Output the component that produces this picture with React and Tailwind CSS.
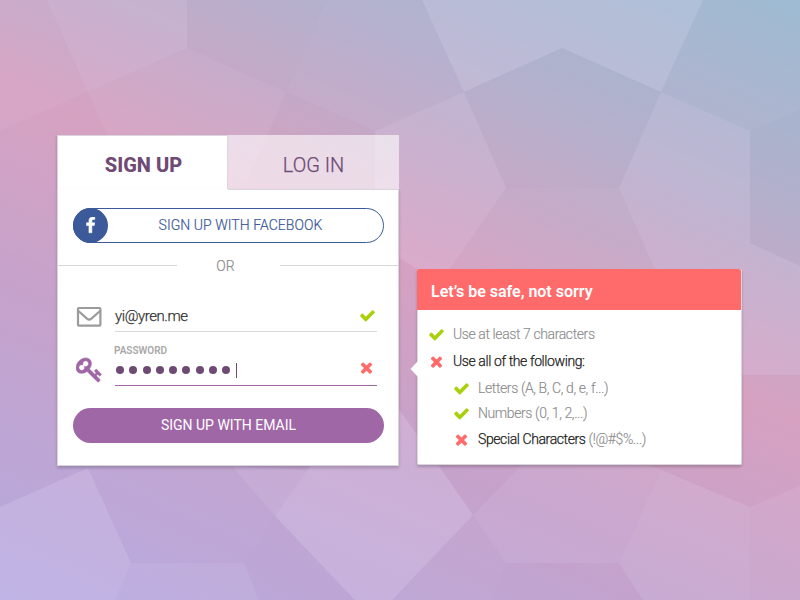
const FACETS = [
  ["0,0 47,0 88,92 0,131", 0.07],
  ["47,0 187,0 187,48 88,92", 0.14],
  ["187,48 286,92 244,188 131,188 88,92", 0.08],
  ["187,0 327,0 286,92 187,48", 0.03],
  ["327,0 422,0 464,92 375,131 286,92", 0.06],
  ["422,0 703,0 661,92 562,48 464,92", 0.2],
  ["703,0 800,0 800,110 750,131 661,92", 0.06],
  ["464,92 562,48 661,92 619,188 506,188", 0.03],
  ["375,131 464,92 506,188 440,283 375,243", 0.15],
  ["506,188 619,188 661,283 440,283", 0.05],
  ["661,92 750,131 750,243 661,283 619,188", 0.15],
  ["750,243 800,266 800,375 700,375 661,283", 0.15],
  ["661,470 750,507 750,600 643,600 619,563", 0.13],
  ["750,507 800,486 800,600 750,600", 0.09],
  ["521,466 562,425 661,470 619,563 506,563 473,515", 0.1],
  ["473,515 506,563 490,600 392,600", 0.04],
  ["375,375 473,515 392,600 355,600 275,516", 0.2],
  ["232,466 308,470 275,516", 0.12],
  ["88,468 232,466 275,516 244,563 131,563", 0.03],
  ["131,563 244,563 259,600 115,600", 0.11],
  ["0,507 88,468 131,563 115,600 0,600", 0.18],
  ["0,131 88,92 131,188 88,283 0,246", 0.03],
];

function Backdrop() {
  return (
    <svg className="absolute inset-0" width="800" height="600" viewBox="0 0 800 600" aria-hidden="true">
      <defs>
        <linearGradient id="sky" gradientUnits="userSpaceOnUse" x1="800" y1="0" x2="463" y2="796">
          <stop offset="0" stopColor="#99b9d0" />
          <stop offset="0.23" stopColor="#b4afcb" />
          <stop offset="0.45" stopColor="#d6a1c1" />
          <stop offset="0.67" stopColor="#c5a2cb" />
          <stop offset="1" stopColor="#b5aae0" />
        </linearGradient>
      </defs>
      <rect width="800" height="600" fill="url(#sky)" />
      {FACETS.map(([points, opacity]) => (
        <polygon key={points} points={points} fill="#efe4ff" fillOpacity={opacity} />
      ))}
    </svg>
  );
}

function Check() {
  return (
    <svg className="size-[17px] shrink-0 text-[#a9d00c]" viewBox="0 0 1792 1792" fill="currentColor">
      <path d="M1671 566q0 40-28 68l-724 724-136 136q-28 28-68 28t-68-28l-136-136-362-362q-28-28-28-68t28-68l136-136q28-28 68-28t68 28l294 295 656-657q28-28 68-28t68 28l136 136q28 28 28 68z" />
    </svg>
  );
}

function Cross() {
  return (
    <svg className="size-[17px] shrink-0 text-[#ff6b6b]" viewBox="0 0 1792 1792" fill="currentColor">
      <path d="M1490 1322q0 40-28 68l-136 136q-28 28-68 28t-68-28l-294-294-294 294q-28 28-68 28t-68-28l-136-136q-28-28-28-68t28-68l294-294-294-294q-28-28-28-68t28-68l136-136q28-28 68-28t68 28l294 294 294-294q28-28 68-28t68 28l136 136q28 28 28 68t-28 68l-294 294 294 294q28 28 28 68z" />
    </svg>
  );
}

function Envelope() {
  return (
    <svg width="27" height="22" viewBox="0 0 27 22" fill="none" stroke="#9b9b9b" strokeWidth="2.2" strokeLinejoin="round">
      <rect x="3" y="2" width="22.4" height="17.6" rx="0.8" />
      <path d="M3.4 5 L12 12.6 Q14.2 14.4 16.4 12.6 L25 5" />
    </svg>
  );
}

function Key() {
  return (
    <svg width="27" height="27" viewBox="0 0 1792 1792" fill="#a067a7" stroke="#a067a7" strokeWidth="40">
      <path d="M832 512q0-80-56-136t-136-56-136 56-56 136q0 42 19 83-41-19-83-19-80 0-136 56t-56 136 56 136 136 56 136-56 56-136q0-42-19-83 41 19 83 19 80 0 136-56t56-136zm851 704q0 17-49 66t-66 49q-9 0-28.5-16t-36.5-33-38.5-40-24.5-26l-96 96 220 220q28 28 28 68 0 42-39 81t-81 39q-40 0-68-28l-671-671q-176 131-365 131-163 0-265.5-102.5t-102.5-265.5q0-160 95-313t248-248 313-95q163 0 265.5 102.5t102.5 265.5q0 189-131 365l355 355 96-96q-3-3-26-24.5t-40-38.5-33-36.5-16-28.5q0-17 49-66t66-49q13 0 23 10 6 6 46 44.5t82 79.5 86.5 86 73 78 28.5 41z" />
    </svg>
  );
}

function FacebookMark() {
  return (
    <svg width="17" height="17" viewBox="0 0 1792 1792" fill="#fff" stroke="#fff" strokeWidth="60">
      <path d="M1343 12v264h-157q-86 0-116 36t-30 108v189h293l-39 296h-254v759h-306v-759h-255v-296h255v-218q0-186 104-288.5t277-102.5q147 0 228 12z" />
    </svg>
  );
}

function SignUpCard() {
  return (
    <div className="flex h-[331px] w-[342px] flex-col">
      <div className="flex h-[54px] shrink-0">
        <div className="flex w-[171px] items-center justify-center border-l border-t border-r border-[#dcd6dc] bg-white pl-[2px] pt-[5px] text-xl font-extrabold text-[#6e4a75] shadow-[-1px_1px_2px_rgba(0,0,0,0.14)]">
          SIGN UP
        </div>
        <div className="flex flex-1 items-center justify-center bg-white/60 pt-[5px] text-xl font-light text-[#6e4a75] [-webkit-text-stroke:0.25px_#6e4a75]">
          LOG IN
        </div>
      </div>
      <div className="relative flex flex-1 flex-col border-x border-b border-[#d8d4da] bg-white shadow-[0_2px_3px_rgba(0,0,0,0.2)]">
        <div className="ml-[170px] h-px shrink-0 bg-[#dcd6dc]" />
        <button className="mx-[15px] mt-[18px] mr-[14px] flex h-[35px] shrink-0 items-center rounded-full border border-[#3c5a99] text-sm font-light tracking-[0.05px] text-[#3c5a99] [-webkit-text-stroke:0.2px_#3c5a99]">
          <span className="-ml-px flex size-[35px] items-center justify-center rounded-full bg-[#3c5a99]">
            <FacebookMark />
          </span>
          <span className="flex-1 pb-[2px] pr-[10px] text-center">SIGN UP WITH FACEBOOK</span>
        </button>
        <div className="mt-[11px] flex h-[22px] shrink-0 items-center text-sm font-light text-[#8c8c8c] [-webkit-text-stroke:0.2px_#8c8c8c]">
          <span className="h-px w-[119px] bg-[#d8d8d8]" />
          <span className="flex-1 pr-[6px] pt-px text-center">OR</span>
          <span className="h-px w-[118px] bg-[#d8d8d8]" />
        </div>
        <div className="mt-[28px] flex h-[28px] shrink-0 pl-[17px] pr-[21px]">
          <div className="w-[40px] pt-[2px]">
            <Envelope />
          </div>
          <div className="flex flex-1 items-start justify-between border-b border-[#d8d8d8] pr-[1px] text-[15px] font-light leading-[22px] tracking-[-0.42px] text-[#333] [-webkit-text-stroke:0.25px_#333]">
            <span className="pt-[1px]">yi@yren.me</span>
            <span className="pt-[3px]">
              <Check />
            </span>
          </div>
        </div>
        <div className="mt-[12px] flex h-[42px] shrink-0 pl-[17px] pr-[21px]">
          <div className="w-[40px] pl-px pt-[12px]">
            <Key />
          </div>
          <div className="flex flex-1 flex-col border-b border-[#a067a7]">
            <span className="-ml-px text-[10px] font-semibold leading-[14px] text-[#a8a8a8]">PASSWORD</span>
            <div className="flex h-[24px] items-center justify-between pr-[2px]">
              <div className="flex items-center gap-[5.3px] pl-[1px]">
                {Array.from({ length: 9 }, (_, i) => (
                  <span key={i} className="size-2 rounded-full bg-[#6e4a75]" />
                ))}
                <span className="h-[15px] w-px bg-[#6e4a75]" />
              </div>
              <span className="pb-[5px]">
                <Cross />
              </span>
            </div>
          </div>
        </div>
        <button className="mx-[15px] mt-[22px] mr-[14px] h-[35px] shrink-0 rounded-full bg-[#a067a7] pb-[2px] text-sm text-white">
          SIGN UP WITH EMAIL
        </button>
      </div>
    </div>
  );
}

function HintCard() {
  return (
    <div className="relative ml-[18px] mt-[134px] flex h-[196px] w-[325px] flex-col rounded-[2px] border-x border-b border-[#dad6dc] bg-white shadow-[0_2px_3px_rgba(0,0,0,0.2)]">
      <svg className="absolute -left-[8px] top-[92px]" width="8" height="16" viewBox="0 0 8 16">
        <path d="M8 0 L0.5 8 L8 16 Z" fill="#fff" />
      </svg>
      <div className="-ml-px flex h-[41px] shrink-0 items-center rounded-t-[2px] bg-[#ff6b6b] pl-[14px] pt-[5px] text-base font-semibold text-white">
        Let’s be safe, not sorry
      </div>
      <div className="flex flex-col pl-[10px] pt-[14px] text-sm font-light leading-5 tracking-[-0.4px] text-[#8c8c8c]">
        <div className="flex h-5 items-center gap-2">
          <Check />
          <span className="-mt-px [-webkit-text-stroke:0.15px_#8c8c8c]">Use at least 7 characters</span>
        </div>
        <div className="mt-[7px] flex h-5 items-center gap-2">
          <Cross />
          <span className="text-[#222] [-webkit-text-stroke:0.25px_#222]">Use all of the following:</span>
        </div>
        <div className="ml-[25px] mt-[7px] flex h-5 items-center gap-2">
          <Check />
          <span className="[-webkit-text-stroke:0.15px_#8c8c8c]">Letters (A, B, C, d, e, f...)</span>
        </div>
        <div className="ml-[25px] mt-[5px] flex h-5 items-center gap-2">
          <Check />
          <span className="[-webkit-text-stroke:0.15px_#8c8c8c]">Numbers (0, 1, 2,...)</span>
        </div>
        <div className="ml-[25px] mt-[6px] flex h-5 items-center gap-2">
          <Cross />
          <span className="[-webkit-text-stroke:0.15px_#8c8c8c]">
            <span className="text-[#222] [-webkit-text-stroke:0.25px_#222]">Special Characters</span> (!@#$%...)
          </span>
        </div>
      </div>
    </div>
  );
}

export default function App() {
  return (
    <div className="relative h-[600px] w-[800px] overflow-hidden font-['Roboto',sans-serif]">
      <Backdrop />
      <main className="relative flex items-start pl-[57px] pt-[135px]">
        <SignUpCard />
        <HintCard />
      </main>
    </div>
  );
}
